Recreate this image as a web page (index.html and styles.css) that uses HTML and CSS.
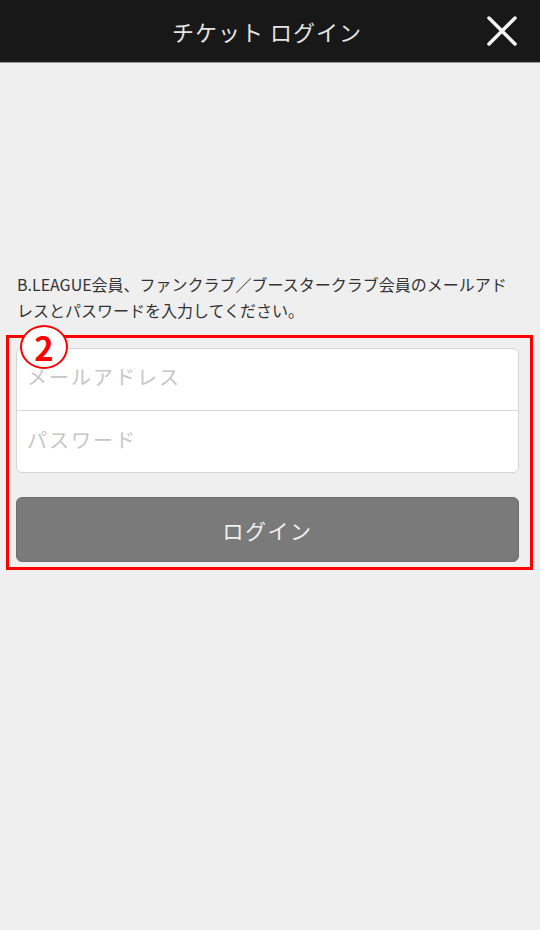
FILE: index.html
```html
<!DOCTYPE html>
<html lang="ja">
<head>
    <meta charset="UTF-8">
    <meta name="viewport" content="width=device-width, initial-scale=1.0">
    <title>チケット ログイン</title>
    <link rel="stylesheet" href="styles.css">
</head>
<body>
    <header class="top-bar">
        <span></span>
        <h1 class="top-title">チケット ログイン</h1>
        <button class="close-btn" type="button" aria-label="閉じる">
            <svg width="30" height="30" viewBox="0 0 30 30">
                <path d="M2 2 L28 28 M28 2 L2 28" stroke="#f4f4f4" stroke-width="3.5" stroke-linecap="round" fill="none"/>
            </svg>
        </button>
    </header>

    <main class="login-main">
        <p class="login-note">B.LEAGUE会員、ファンクラブ／ブースタークラブ会員のメールアドレスとパスワードを入力してください。</p>

        <!-- annotated area -->
        <div class="mark-box">
            <span class="mark-num">2</span>
            <form class="login-form">
                <div class="field-group">
                    <input type="email" class="field" placeholder="メールアドレス">
                    <input type="password" class="field" placeholder="パスワード">
                </div>
                <button type="button" class="login-btn">ログイン</button>
            </form>
        </div>
    </main>
</body>
</html>
```

FILE: styles.css
```css
body {
    margin: 0;
    padding: 0;
    background: #efefef;
    font-family: "Noto Sans CJK JP", "Noto Sans", sans-serif;
    color: #333;
}

.top-bar {
    display: grid;
    grid-template-columns: 1fr auto 1fr;
    align-items: center;
    height: 62px;
    background: #181818;
    border-bottom: 1px solid #9a9a9a;
}

.top-title {
    margin: 0 6px 0 0;
    font-size: 22px;
    font-weight: normal;
    letter-spacing: 1px;
    color: #e4e4e4;
}

.close-btn {
    justify-self: end;
    margin-right: 23px;
    padding: 0;
    width: 30px;
    height: 30px;
    background: none;
    border: none;
    cursor: pointer;
}

.close-btn svg {
    display: block;
}

.login-main {
    padding-top: 208px;
}

.login-note {
    margin: 0 0 12px 17px;
    width: 500px;
    font-size: 16px;
    line-height: 26px;
    color: #333;
}

.mark-box {
    position: relative;
    box-sizing: border-box;
    margin-left: 6px;
    width: 527px;
    border: 3px solid #ff0000;
    padding: 10px 0 5px 7px;
}

.mark-num {
    position: absolute;
    left: 11px;
    top: -13px;
    width: 44px;
    height: 40px;
    border: 2px solid #ff0000;
    border-radius: 50%;
    background: #fff;
    color: #ff0000;
    font-size: 33px;
    font-weight: bold;
    line-height: 40px;
    text-align: center;
    z-index: 2;
}

.login-form {
    width: 503px;
}

.field-group {
    background: #fff;
    border: 1px solid #d4d4d4;
    border-radius: 6px;
    display: flex;
    flex-direction: column;
}

.field {
    height: 61px;
    box-sizing: border-box;
    border: none;
    background: transparent;
    padding: 0 10px 4px;
    font-family: inherit;
    font-size: 20px;
    letter-spacing: 2px;
    outline: none;
}

.field:first-child {
    border-bottom: 1px solid #d8d8d8;
    height: 62px;
    padding-bottom: 6px;
}

.field::placeholder {
    color: #c6c6c6;
}

.login-btn {
    display: block;
    width: 100%;
    height: 65px;
    margin-top: 24px;
    background: #7a7a7a;
    color: #f0f0f0;
    border: 1px solid #6e6e6e;
    border-radius: 6px;
    font-family: inherit;
    font-size: 21px;
    letter-spacing: 1.5px;
    cursor: pointer;
}
```
